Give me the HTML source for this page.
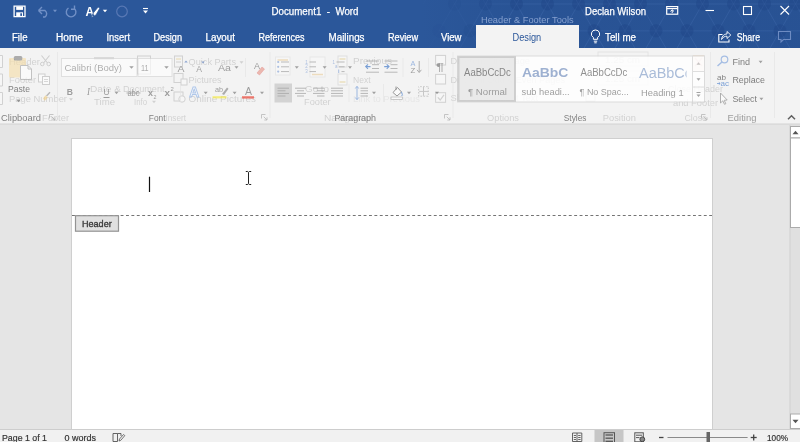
<!DOCTYPE html>
<html><head><meta charset="utf-8"><title>Document1 - Word</title>
<style>
html,body{margin:0;padding:0;width:800px;height:442px;overflow:hidden;background:#e5e5e5;font-family:"Liberation Sans",sans-serif}
svg{display:block;position:absolute;left:0;top:0;will-change:transform}
</style></head><body>
<svg width="800" height="442" viewBox="0 0 800 442">
<rect x="0" y="0" width="800" height="442" fill="#e5e5e5"/>
<rect x="0" y="0" width="800" height="48" fill="#2b579a"/>
<defs><linearGradient id="tg" x1="0" x2="1"><stop offset="0" stop-color="#1d3f7a" stop-opacity="0"/><stop offset=".25" stop-color="#1d3f7a" stop-opacity=".16"/><stop offset="1" stop-color="#1d3f7a" stop-opacity=".2"/></linearGradient></defs>
<rect x="420" y="0" width="380" height="48" fill="url(#tg)"/>
<clipPath id="tc"><rect x="420" y="0" width="380" height="48"/></clipPath>
<g clip-path="url(#tc)">
<line x1="439" y1="-22.85" x2="470" y2="-22.85" stroke="#4b74b6" stroke-width="1" opacity="0.05"/>
<line x1="439" y1="-22.85" x2="454.5" y2="4.0" stroke="#4b74b6" stroke-width="1" opacity="0.05"/>
<line x1="439" y1="-22.85" x2="423.5" y2="4.0" stroke="#4b74b6" stroke-width="1" opacity="0.05"/>
<circle cx="439.0" cy="-22.8" r="6.5" fill="#1f4485" opacity="0.06"/>
<line x1="470" y1="-22.85" x2="501" y2="-22.85" stroke="#4b74b6" stroke-width="1" opacity="0.15"/>
<line x1="470" y1="-22.85" x2="485.5" y2="4.0" stroke="#4b74b6" stroke-width="1" opacity="0.15"/>
<line x1="470" y1="-22.85" x2="454.5" y2="4.0" stroke="#4b74b6" stroke-width="1" opacity="0.15"/>
<circle cx="470.0" cy="-22.8" r="6.5" fill="#1f4485" opacity="0.20"/>
<line x1="501" y1="-22.85" x2="532" y2="-22.85" stroke="#4b74b6" stroke-width="1" opacity="0.25"/>
<line x1="501" y1="-22.85" x2="516.5" y2="4.0" stroke="#4b74b6" stroke-width="1" opacity="0.25"/>
<line x1="501" y1="-22.85" x2="485.5" y2="4.0" stroke="#4b74b6" stroke-width="1" opacity="0.25"/>
<circle cx="501.0" cy="-22.8" r="6.5" fill="#1f4485" opacity="0.34"/>
<line x1="532" y1="-22.85" x2="563" y2="-22.85" stroke="#4b74b6" stroke-width="1" opacity="0.3"/>
<line x1="532" y1="-22.85" x2="547.5" y2="4.0" stroke="#4b74b6" stroke-width="1" opacity="0.3"/>
<line x1="532" y1="-22.85" x2="516.5" y2="4.0" stroke="#4b74b6" stroke-width="1" opacity="0.3"/>
<circle cx="532.0" cy="-22.8" r="6.5" fill="#1f4485" opacity="0.40"/>
<line x1="563" y1="-22.85" x2="594" y2="-22.85" stroke="#4b74b6" stroke-width="1" opacity="0.3"/>
<line x1="563" y1="-22.85" x2="578.5" y2="4.0" stroke="#4b74b6" stroke-width="1" opacity="0.3"/>
<line x1="563" y1="-22.85" x2="547.5" y2="4.0" stroke="#4b74b6" stroke-width="1" opacity="0.3"/>
<circle cx="563.0" cy="-22.8" r="6.5" fill="#1f4485" opacity="0.40"/>
<line x1="594" y1="-22.85" x2="625" y2="-22.85" stroke="#4b74b6" stroke-width="1" opacity="0.3"/>
<line x1="594" y1="-22.85" x2="609.5" y2="4.0" stroke="#4b74b6" stroke-width="1" opacity="0.3"/>
<line x1="594" y1="-22.85" x2="578.5" y2="4.0" stroke="#4b74b6" stroke-width="1" opacity="0.3"/>
<circle cx="594.0" cy="-22.8" r="6.5" fill="#1f4485" opacity="0.40"/>
<line x1="625" y1="-22.85" x2="656" y2="-22.85" stroke="#4b74b6" stroke-width="1" opacity="0.3"/>
<line x1="625" y1="-22.85" x2="640.5" y2="4.0" stroke="#4b74b6" stroke-width="1" opacity="0.3"/>
<line x1="625" y1="-22.85" x2="609.5" y2="4.0" stroke="#4b74b6" stroke-width="1" opacity="0.3"/>
<circle cx="625.0" cy="-22.8" r="6.5" fill="#1f4485" opacity="0.40"/>
<line x1="656" y1="-22.85" x2="687" y2="-22.85" stroke="#4b74b6" stroke-width="1" opacity="0.3"/>
<line x1="656" y1="-22.85" x2="671.5" y2="4.0" stroke="#4b74b6" stroke-width="1" opacity="0.3"/>
<line x1="656" y1="-22.85" x2="640.5" y2="4.0" stroke="#4b74b6" stroke-width="1" opacity="0.3"/>
<circle cx="656.0" cy="-22.8" r="6.5" fill="#1f4485" opacity="0.40"/>
<line x1="687" y1="-22.85" x2="718" y2="-22.85" stroke="#4b74b6" stroke-width="1" opacity="0.3"/>
<line x1="687" y1="-22.85" x2="702.5" y2="4.0" stroke="#4b74b6" stroke-width="1" opacity="0.3"/>
<line x1="687" y1="-22.85" x2="671.5" y2="4.0" stroke="#4b74b6" stroke-width="1" opacity="0.3"/>
<circle cx="687.0" cy="-22.8" r="6.5" fill="#1f4485" opacity="0.40"/>
<line x1="718" y1="-22.85" x2="749" y2="-22.85" stroke="#4b74b6" stroke-width="1" opacity="0.3"/>
<line x1="718" y1="-22.85" x2="733.5" y2="4.0" stroke="#4b74b6" stroke-width="1" opacity="0.3"/>
<line x1="718" y1="-22.85" x2="702.5" y2="4.0" stroke="#4b74b6" stroke-width="1" opacity="0.3"/>
<circle cx="718.0" cy="-22.8" r="6.5" fill="#1f4485" opacity="0.40"/>
<line x1="749" y1="-22.85" x2="780" y2="-22.85" stroke="#4b74b6" stroke-width="1" opacity="0.3"/>
<line x1="749" y1="-22.85" x2="764.5" y2="4.0" stroke="#4b74b6" stroke-width="1" opacity="0.3"/>
<line x1="749" y1="-22.85" x2="733.5" y2="4.0" stroke="#4b74b6" stroke-width="1" opacity="0.3"/>
<circle cx="749.0" cy="-22.8" r="6.5" fill="#1f4485" opacity="0.40"/>
<line x1="780" y1="-22.85" x2="811" y2="-22.85" stroke="#4b74b6" stroke-width="1" opacity="0.3"/>
<line x1="780" y1="-22.85" x2="795.5" y2="4.0" stroke="#4b74b6" stroke-width="1" opacity="0.3"/>
<line x1="780" y1="-22.85" x2="764.5" y2="4.0" stroke="#4b74b6" stroke-width="1" opacity="0.3"/>
<circle cx="780.0" cy="-22.8" r="6.5" fill="#1f4485" opacity="0.40"/>
<line x1="811" y1="-22.85" x2="842" y2="-22.85" stroke="#4b74b6" stroke-width="1" opacity="0.3"/>
<line x1="811" y1="-22.85" x2="826.5" y2="4.0" stroke="#4b74b6" stroke-width="1" opacity="0.3"/>
<line x1="811" y1="-22.85" x2="795.5" y2="4.0" stroke="#4b74b6" stroke-width="1" opacity="0.3"/>
<circle cx="811.0" cy="-22.8" r="6.5" fill="#1f4485" opacity="0.40"/>
<line x1="454.5" y1="4" x2="485.5" y2="4" stroke="#4b74b6" stroke-width="1" opacity="0.1"/>
<line x1="454.5" y1="4" x2="470.0" y2="30.85" stroke="#4b74b6" stroke-width="1" opacity="0.1"/>
<line x1="454.5" y1="4" x2="439.0" y2="30.85" stroke="#4b74b6" stroke-width="1" opacity="0.1"/>
<circle cx="454.5" cy="4.0" r="6.5" fill="#1f4485" opacity="0.13"/>
<line x1="485.5" y1="4" x2="516.5" y2="4" stroke="#4b74b6" stroke-width="1" opacity="0.2"/>
<line x1="485.5" y1="4" x2="501.0" y2="30.85" stroke="#4b74b6" stroke-width="1" opacity="0.2"/>
<line x1="485.5" y1="4" x2="470.0" y2="30.85" stroke="#4b74b6" stroke-width="1" opacity="0.2"/>
<circle cx="485.5" cy="4.0" r="6.5" fill="#1f4485" opacity="0.27"/>
<line x1="516.5" y1="4" x2="547.5" y2="4" stroke="#4b74b6" stroke-width="1" opacity="0.3"/>
<line x1="516.5" y1="4" x2="532.0" y2="30.85" stroke="#4b74b6" stroke-width="1" opacity="0.3"/>
<line x1="516.5" y1="4" x2="501.0" y2="30.85" stroke="#4b74b6" stroke-width="1" opacity="0.3"/>
<circle cx="516.5" cy="4.0" r="6.5" fill="#1f4485" opacity="0.40"/>
<line x1="547.5" y1="4" x2="578.5" y2="4" stroke="#4b74b6" stroke-width="1" opacity="0.3"/>
<line x1="547.5" y1="4" x2="563.0" y2="30.85" stroke="#4b74b6" stroke-width="1" opacity="0.3"/>
<line x1="547.5" y1="4" x2="532.0" y2="30.85" stroke="#4b74b6" stroke-width="1" opacity="0.3"/>
<circle cx="547.5" cy="4.0" r="6.5" fill="#1f4485" opacity="0.40"/>
<line x1="578.5" y1="4" x2="609.5" y2="4" stroke="#4b74b6" stroke-width="1" opacity="0.3"/>
<line x1="578.5" y1="4" x2="594.0" y2="30.85" stroke="#4b74b6" stroke-width="1" opacity="0.3"/>
<line x1="578.5" y1="4" x2="563.0" y2="30.85" stroke="#4b74b6" stroke-width="1" opacity="0.3"/>
<circle cx="578.5" cy="4.0" r="6.5" fill="#1f4485" opacity="0.40"/>
<line x1="609.5" y1="4" x2="640.5" y2="4" stroke="#4b74b6" stroke-width="1" opacity="0.3"/>
<line x1="609.5" y1="4" x2="625.0" y2="30.85" stroke="#4b74b6" stroke-width="1" opacity="0.3"/>
<line x1="609.5" y1="4" x2="594.0" y2="30.85" stroke="#4b74b6" stroke-width="1" opacity="0.3"/>
<circle cx="609.5" cy="4.0" r="6.5" fill="#1f4485" opacity="0.40"/>
<line x1="640.5" y1="4" x2="671.5" y2="4" stroke="#4b74b6" stroke-width="1" opacity="0.3"/>
<line x1="640.5" y1="4" x2="656.0" y2="30.85" stroke="#4b74b6" stroke-width="1" opacity="0.3"/>
<line x1="640.5" y1="4" x2="625.0" y2="30.85" stroke="#4b74b6" stroke-width="1" opacity="0.3"/>
<circle cx="640.5" cy="4.0" r="6.5" fill="#1f4485" opacity="0.40"/>
<line x1="671.5" y1="4" x2="702.5" y2="4" stroke="#4b74b6" stroke-width="1" opacity="0.3"/>
<line x1="671.5" y1="4" x2="687.0" y2="30.85" stroke="#4b74b6" stroke-width="1" opacity="0.3"/>
<line x1="671.5" y1="4" x2="656.0" y2="30.85" stroke="#4b74b6" stroke-width="1" opacity="0.3"/>
<circle cx="671.5" cy="4.0" r="6.5" fill="#1f4485" opacity="0.40"/>
<line x1="702.5" y1="4" x2="733.5" y2="4" stroke="#4b74b6" stroke-width="1" opacity="0.3"/>
<line x1="702.5" y1="4" x2="718.0" y2="30.85" stroke="#4b74b6" stroke-width="1" opacity="0.3"/>
<line x1="702.5" y1="4" x2="687.0" y2="30.85" stroke="#4b74b6" stroke-width="1" opacity="0.3"/>
<circle cx="702.5" cy="4.0" r="6.5" fill="#1f4485" opacity="0.40"/>
<line x1="733.5" y1="4" x2="764.5" y2="4" stroke="#4b74b6" stroke-width="1" opacity="0.3"/>
<line x1="733.5" y1="4" x2="749.0" y2="30.85" stroke="#4b74b6" stroke-width="1" opacity="0.3"/>
<line x1="733.5" y1="4" x2="718.0" y2="30.85" stroke="#4b74b6" stroke-width="1" opacity="0.3"/>
<circle cx="733.5" cy="4.0" r="6.5" fill="#1f4485" opacity="0.40"/>
<line x1="764.5" y1="4" x2="795.5" y2="4" stroke="#4b74b6" stroke-width="1" opacity="0.3"/>
<line x1="764.5" y1="4" x2="780.0" y2="30.85" stroke="#4b74b6" stroke-width="1" opacity="0.3"/>
<line x1="764.5" y1="4" x2="749.0" y2="30.85" stroke="#4b74b6" stroke-width="1" opacity="0.3"/>
<circle cx="764.5" cy="4.0" r="6.5" fill="#1f4485" opacity="0.40"/>
<line x1="795.5" y1="4" x2="826.5" y2="4" stroke="#4b74b6" stroke-width="1" opacity="0.3"/>
<line x1="795.5" y1="4" x2="811.0" y2="30.85" stroke="#4b74b6" stroke-width="1" opacity="0.3"/>
<line x1="795.5" y1="4" x2="780.0" y2="30.85" stroke="#4b74b6" stroke-width="1" opacity="0.3"/>
<circle cx="795.5" cy="4.0" r="6.5" fill="#1f4485" opacity="0.40"/>
<line x1="439" y1="30.85" x2="470" y2="30.85" stroke="#4b74b6" stroke-width="1" opacity="0.05"/>
<line x1="439" y1="30.85" x2="454.5" y2="57.69" stroke="#4b74b6" stroke-width="1" opacity="0.05"/>
<line x1="439" y1="30.85" x2="423.5" y2="57.69" stroke="#4b74b6" stroke-width="1" opacity="0.05"/>
<circle cx="439.0" cy="30.8" r="6.5" fill="#1f4485" opacity="0.06"/>
<line x1="470" y1="30.85" x2="501" y2="30.85" stroke="#4b74b6" stroke-width="1" opacity="0.15"/>
<line x1="470" y1="30.85" x2="485.5" y2="57.69" stroke="#4b74b6" stroke-width="1" opacity="0.15"/>
<line x1="470" y1="30.85" x2="454.5" y2="57.69" stroke="#4b74b6" stroke-width="1" opacity="0.15"/>
<circle cx="470.0" cy="30.8" r="6.5" fill="#1f4485" opacity="0.20"/>
<line x1="501" y1="30.85" x2="532" y2="30.85" stroke="#4b74b6" stroke-width="1" opacity="0.25"/>
<line x1="501" y1="30.85" x2="516.5" y2="57.69" stroke="#4b74b6" stroke-width="1" opacity="0.25"/>
<line x1="501" y1="30.85" x2="485.5" y2="57.69" stroke="#4b74b6" stroke-width="1" opacity="0.25"/>
<circle cx="501.0" cy="30.8" r="6.5" fill="#1f4485" opacity="0.34"/>
<line x1="532" y1="30.85" x2="563" y2="30.85" stroke="#4b74b6" stroke-width="1" opacity="0.3"/>
<line x1="532" y1="30.85" x2="547.5" y2="57.69" stroke="#4b74b6" stroke-width="1" opacity="0.3"/>
<line x1="532" y1="30.85" x2="516.5" y2="57.69" stroke="#4b74b6" stroke-width="1" opacity="0.3"/>
<circle cx="532.0" cy="30.8" r="6.5" fill="#1f4485" opacity="0.40"/>
<line x1="563" y1="30.85" x2="594" y2="30.85" stroke="#4b74b6" stroke-width="1" opacity="0.3"/>
<line x1="563" y1="30.85" x2="578.5" y2="57.69" stroke="#4b74b6" stroke-width="1" opacity="0.3"/>
<line x1="563" y1="30.85" x2="547.5" y2="57.69" stroke="#4b74b6" stroke-width="1" opacity="0.3"/>
<circle cx="563.0" cy="30.8" r="6.5" fill="#1f4485" opacity="0.40"/>
<line x1="594" y1="30.85" x2="625" y2="30.85" stroke="#4b74b6" stroke-width="1" opacity="0.3"/>
<line x1="594" y1="30.85" x2="609.5" y2="57.69" stroke="#4b74b6" stroke-width="1" opacity="0.3"/>
<line x1="594" y1="30.85" x2="578.5" y2="57.69" stroke="#4b74b6" stroke-width="1" opacity="0.3"/>
<circle cx="594.0" cy="30.8" r="6.5" fill="#1f4485" opacity="0.40"/>
<line x1="625" y1="30.85" x2="656" y2="30.85" stroke="#4b74b6" stroke-width="1" opacity="0.3"/>
<line x1="625" y1="30.85" x2="640.5" y2="57.69" stroke="#4b74b6" stroke-width="1" opacity="0.3"/>
<line x1="625" y1="30.85" x2="609.5" y2="57.69" stroke="#4b74b6" stroke-width="1" opacity="0.3"/>
<circle cx="625.0" cy="30.8" r="6.5" fill="#1f4485" opacity="0.40"/>
<line x1="656" y1="30.85" x2="687" y2="30.85" stroke="#4b74b6" stroke-width="1" opacity="0.3"/>
<line x1="656" y1="30.85" x2="671.5" y2="57.69" stroke="#4b74b6" stroke-width="1" opacity="0.3"/>
<line x1="656" y1="30.85" x2="640.5" y2="57.69" stroke="#4b74b6" stroke-width="1" opacity="0.3"/>
<circle cx="656.0" cy="30.8" r="6.5" fill="#1f4485" opacity="0.40"/>
<line x1="687" y1="30.85" x2="718" y2="30.85" stroke="#4b74b6" stroke-width="1" opacity="0.3"/>
<line x1="687" y1="30.85" x2="702.5" y2="57.69" stroke="#4b74b6" stroke-width="1" opacity="0.3"/>
<line x1="687" y1="30.85" x2="671.5" y2="57.69" stroke="#4b74b6" stroke-width="1" opacity="0.3"/>
<circle cx="687.0" cy="30.8" r="6.5" fill="#1f4485" opacity="0.40"/>
<line x1="718" y1="30.85" x2="749" y2="30.85" stroke="#4b74b6" stroke-width="1" opacity="0.3"/>
<line x1="718" y1="30.85" x2="733.5" y2="57.69" stroke="#4b74b6" stroke-width="1" opacity="0.3"/>
<line x1="718" y1="30.85" x2="702.5" y2="57.69" stroke="#4b74b6" stroke-width="1" opacity="0.3"/>
<circle cx="718.0" cy="30.8" r="6.5" fill="#1f4485" opacity="0.40"/>
<line x1="749" y1="30.85" x2="780" y2="30.85" stroke="#4b74b6" stroke-width="1" opacity="0.3"/>
<line x1="749" y1="30.85" x2="764.5" y2="57.69" stroke="#4b74b6" stroke-width="1" opacity="0.3"/>
<line x1="749" y1="30.85" x2="733.5" y2="57.69" stroke="#4b74b6" stroke-width="1" opacity="0.3"/>
<circle cx="749.0" cy="30.8" r="6.5" fill="#1f4485" opacity="0.40"/>
<line x1="780" y1="30.85" x2="811" y2="30.85" stroke="#4b74b6" stroke-width="1" opacity="0.3"/>
<line x1="780" y1="30.85" x2="795.5" y2="57.69" stroke="#4b74b6" stroke-width="1" opacity="0.3"/>
<line x1="780" y1="30.85" x2="764.5" y2="57.69" stroke="#4b74b6" stroke-width="1" opacity="0.3"/>
<circle cx="780.0" cy="30.8" r="6.5" fill="#1f4485" opacity="0.40"/>
<line x1="811" y1="30.85" x2="842" y2="30.85" stroke="#4b74b6" stroke-width="1" opacity="0.3"/>
<line x1="811" y1="30.85" x2="826.5" y2="57.69" stroke="#4b74b6" stroke-width="1" opacity="0.3"/>
<line x1="811" y1="30.85" x2="795.5" y2="57.69" stroke="#4b74b6" stroke-width="1" opacity="0.3"/>
<circle cx="811.0" cy="30.8" r="6.5" fill="#1f4485" opacity="0.40"/>
<line x1="454.5" y1="57.69" x2="485.5" y2="57.69" stroke="#4b74b6" stroke-width="1" opacity="0.1"/>
<line x1="454.5" y1="57.69" x2="470.0" y2="84.54" stroke="#4b74b6" stroke-width="1" opacity="0.1"/>
<line x1="454.5" y1="57.69" x2="439.0" y2="84.54" stroke="#4b74b6" stroke-width="1" opacity="0.1"/>
<circle cx="454.5" cy="57.7" r="6.5" fill="#1f4485" opacity="0.13"/>
<line x1="485.5" y1="57.69" x2="516.5" y2="57.69" stroke="#4b74b6" stroke-width="1" opacity="0.2"/>
<line x1="485.5" y1="57.69" x2="501.0" y2="84.54" stroke="#4b74b6" stroke-width="1" opacity="0.2"/>
<line x1="485.5" y1="57.69" x2="470.0" y2="84.54" stroke="#4b74b6" stroke-width="1" opacity="0.2"/>
<circle cx="485.5" cy="57.7" r="6.5" fill="#1f4485" opacity="0.27"/>
<line x1="516.5" y1="57.69" x2="547.5" y2="57.69" stroke="#4b74b6" stroke-width="1" opacity="0.3"/>
<line x1="516.5" y1="57.69" x2="532.0" y2="84.54" stroke="#4b74b6" stroke-width="1" opacity="0.3"/>
<line x1="516.5" y1="57.69" x2="501.0" y2="84.54" stroke="#4b74b6" stroke-width="1" opacity="0.3"/>
<circle cx="516.5" cy="57.7" r="6.5" fill="#1f4485" opacity="0.40"/>
<line x1="547.5" y1="57.69" x2="578.5" y2="57.69" stroke="#4b74b6" stroke-width="1" opacity="0.3"/>
<line x1="547.5" y1="57.69" x2="563.0" y2="84.54" stroke="#4b74b6" stroke-width="1" opacity="0.3"/>
<line x1="547.5" y1="57.69" x2="532.0" y2="84.54" stroke="#4b74b6" stroke-width="1" opacity="0.3"/>
<circle cx="547.5" cy="57.7" r="6.5" fill="#1f4485" opacity="0.40"/>
<line x1="578.5" y1="57.69" x2="609.5" y2="57.69" stroke="#4b74b6" stroke-width="1" opacity="0.3"/>
<line x1="578.5" y1="57.69" x2="594.0" y2="84.54" stroke="#4b74b6" stroke-width="1" opacity="0.3"/>
<line x1="578.5" y1="57.69" x2="563.0" y2="84.54" stroke="#4b74b6" stroke-width="1" opacity="0.3"/>
<circle cx="578.5" cy="57.7" r="6.5" fill="#1f4485" opacity="0.40"/>
<line x1="609.5" y1="57.69" x2="640.5" y2="57.69" stroke="#4b74b6" stroke-width="1" opacity="0.3"/>
<line x1="609.5" y1="57.69" x2="625.0" y2="84.54" stroke="#4b74b6" stroke-width="1" opacity="0.3"/>
<line x1="609.5" y1="57.69" x2="594.0" y2="84.54" stroke="#4b74b6" stroke-width="1" opacity="0.3"/>
<circle cx="609.5" cy="57.7" r="6.5" fill="#1f4485" opacity="0.40"/>
<line x1="640.5" y1="57.69" x2="671.5" y2="57.69" stroke="#4b74b6" stroke-width="1" opacity="0.3"/>
<line x1="640.5" y1="57.69" x2="656.0" y2="84.54" stroke="#4b74b6" stroke-width="1" opacity="0.3"/>
<line x1="640.5" y1="57.69" x2="625.0" y2="84.54" stroke="#4b74b6" stroke-width="1" opacity="0.3"/>
<circle cx="640.5" cy="57.7" r="6.5" fill="#1f4485" opacity="0.40"/>
<line x1="671.5" y1="57.69" x2="702.5" y2="57.69" stroke="#4b74b6" stroke-width="1" opacity="0.3"/>
<line x1="671.5" y1="57.69" x2="687.0" y2="84.54" stroke="#4b74b6" stroke-width="1" opacity="0.3"/>
<line x1="671.5" y1="57.69" x2="656.0" y2="84.54" stroke="#4b74b6" stroke-width="1" opacity="0.3"/>
<circle cx="671.5" cy="57.7" r="6.5" fill="#1f4485" opacity="0.40"/>
<line x1="702.5" y1="57.69" x2="733.5" y2="57.69" stroke="#4b74b6" stroke-width="1" opacity="0.3"/>
<line x1="702.5" y1="57.69" x2="718.0" y2="84.54" stroke="#4b74b6" stroke-width="1" opacity="0.3"/>
<line x1="702.5" y1="57.69" x2="687.0" y2="84.54" stroke="#4b74b6" stroke-width="1" opacity="0.3"/>
<circle cx="702.5" cy="57.7" r="6.5" fill="#1f4485" opacity="0.40"/>
<line x1="733.5" y1="57.69" x2="764.5" y2="57.69" stroke="#4b74b6" stroke-width="1" opacity="0.3"/>
<line x1="733.5" y1="57.69" x2="749.0" y2="84.54" stroke="#4b74b6" stroke-width="1" opacity="0.3"/>
<line x1="733.5" y1="57.69" x2="718.0" y2="84.54" stroke="#4b74b6" stroke-width="1" opacity="0.3"/>
<circle cx="733.5" cy="57.7" r="6.5" fill="#1f4485" opacity="0.40"/>
<line x1="764.5" y1="57.69" x2="795.5" y2="57.69" stroke="#4b74b6" stroke-width="1" opacity="0.3"/>
<line x1="764.5" y1="57.69" x2="780.0" y2="84.54" stroke="#4b74b6" stroke-width="1" opacity="0.3"/>
<line x1="764.5" y1="57.69" x2="749.0" y2="84.54" stroke="#4b74b6" stroke-width="1" opacity="0.3"/>
<circle cx="764.5" cy="57.7" r="6.5" fill="#1f4485" opacity="0.40"/>
<line x1="795.5" y1="57.69" x2="826.5" y2="57.69" stroke="#4b74b6" stroke-width="1" opacity="0.3"/>
<line x1="795.5" y1="57.69" x2="811.0" y2="84.54" stroke="#4b74b6" stroke-width="1" opacity="0.3"/>
<line x1="795.5" y1="57.69" x2="780.0" y2="84.54" stroke="#4b74b6" stroke-width="1" opacity="0.3"/>
<circle cx="795.5" cy="57.7" r="6.5" fill="#1f4485" opacity="0.40"/>
</g>
<text x="481.0" y="23.0" font-size="9.5" fill="#86a0cf" textLength="92.7" lengthAdjust="spacingAndGlyphs" font-family="Liberation Sans, sans-serif">Header &amp; Footer Tools</text>
<rect x="476" y="25" width="103" height="24" fill="#f3f3f3"/>
<text x="271.5" y="14.8" font-size="10.5" fill="#fff" textLength="87.0" lengthAdjust="spacingAndGlyphs" font-family="Liberation Sans, sans-serif" stroke="#fff" stroke-width="0.25">Document1  -  Word</text>
<text x="585.0" y="14.8" font-size="10.5" fill="#fff" textLength="61.0" lengthAdjust="spacingAndGlyphs" font-family="Liberation Sans, sans-serif" stroke="#fff" stroke-width="0.25">Declan Wilson</text>
<text x="12.0" y="40.6" font-size="10" fill="#fff" textLength="15.5" lengthAdjust="spacingAndGlyphs" font-family="Liberation Sans, sans-serif" stroke="#fff" stroke-width="0.25">File</text>
<text x="56.0" y="40.6" font-size="10" fill="#fff" textLength="27.0" lengthAdjust="spacingAndGlyphs" font-family="Liberation Sans, sans-serif" stroke="#fff" stroke-width="0.25">Home</text>
<text x="106.5" y="40.6" font-size="10" fill="#fff" textLength="23.5" lengthAdjust="spacingAndGlyphs" font-family="Liberation Sans, sans-serif" stroke="#fff" stroke-width="0.25">Insert</text>
<text x="153.5" y="40.6" font-size="10" fill="#fff" textLength="28.5" lengthAdjust="spacingAndGlyphs" font-family="Liberation Sans, sans-serif" stroke="#fff" stroke-width="0.25">Design</text>
<text x="205.5" y="40.6" font-size="10" fill="#fff" textLength="29.5" lengthAdjust="spacingAndGlyphs" font-family="Liberation Sans, sans-serif" stroke="#fff" stroke-width="0.25">Layout</text>
<text x="258.5" y="40.6" font-size="10" fill="#fff" textLength="46.0" lengthAdjust="spacingAndGlyphs" font-family="Liberation Sans, sans-serif" stroke="#fff" stroke-width="0.25">References</text>
<text x="328.5" y="40.6" font-size="10" fill="#fff" textLength="36.0" lengthAdjust="spacingAndGlyphs" font-family="Liberation Sans, sans-serif" stroke="#fff" stroke-width="0.25">Mailings</text>
<text x="388.0" y="40.6" font-size="10" fill="#fff" textLength="30.0" lengthAdjust="spacingAndGlyphs" font-family="Liberation Sans, sans-serif" stroke="#fff" stroke-width="0.25">Review</text>
<text x="441.0" y="40.6" font-size="10" fill="#fff" textLength="20.5" lengthAdjust="spacingAndGlyphs" font-family="Liberation Sans, sans-serif" stroke="#fff" stroke-width="0.25">View</text>
<text x="605.0" y="40.6" font-size="10" fill="#fff" textLength="31.0" lengthAdjust="spacingAndGlyphs" font-family="Liberation Sans, sans-serif" stroke="#fff" stroke-width="0.25">Tell me</text>
<text x="736.7" y="40.6" font-size="10" fill="#fff" textLength="23.3" lengthAdjust="spacingAndGlyphs" font-family="Liberation Sans, sans-serif" stroke="#fff" stroke-width="0.25">Share</text>
<text x="512.5" y="40.6" font-size="10" fill="#2b579a" textLength="28.7" lengthAdjust="spacingAndGlyphs" font-family="Liberation Sans, sans-serif">Design</text>
<path d="M14.1,6.2 H25 V16.6 H14.1 Z" fill="none" stroke="#fff" stroke-width="1.3" />
<rect x="16.2" y="6.5" width="6.8" height="3.4" fill="#fff"/>
<rect x="16.2" y="12.3" width="6.8" height="4.3" fill="#fff"/>
<rect x="20.3" y="13.3" width="1.7" height="2.6" fill="#2b579a"/>
<path d="M38.5,10.5 L42,7 M38.5,10.5 L42,14 M38.5,10.5 H45 A4,4 0 0 1 45,17 H43" fill="none" stroke="#7190c6" stroke-width="1.4" />
<path d="M53.0,9.75 L57.0,9.75 L55,12.25 Z" fill="#7190c6" />
<path d="M68.5,8 A4.8,4.8 0 1 0 74,8.2 M74.5,5.5 V9.2 H71" fill="none" stroke="#7190c6" stroke-width="1.4" />
<text x="85.5" y="15.7" font-size="13" fill="#fff" textLength="8.5" lengthAdjust="spacingAndGlyphs" font-family="Liberation Sans, sans-serif" font-weight="bold">A</text>
<path d="M98.2,7 L93.8,12.2 L91,17.8 L96,15 L99.8,8.3 Z" fill="#fff" stroke="#2b579a" stroke-width="0.8" />
<circle cx="93.3" cy="15.2" r="1" fill="#2b579a"/>
<path d="M102.75,9.75 L107.25,9.75 L105,12.25 Z" fill="#fff" />
<circle cx="122" cy="11.5" r="5.3" fill="none" stroke="#5878b4" stroke-width="1.2"/>
<line x1="143" y1="8.5" x2="148" y2="8.5" stroke="#fff" stroke-width="1.1"/>
<path d="M143.0,10.5 L148.0,10.5 L145.5,13.5 Z" fill="#fff" />
<rect x="666.7" y="6.6" width="11" height="7.6" fill="none" stroke="#fff" stroke-width="1.2"/>
<line x1="666.7" y1="8.6" x2="677.7" y2="8.6" stroke="#fff" stroke-width="1.2"/>
<path d="M672.2,13 V10 M670.4,11.4 L672.2,9.8 L674,11.4" fill="none" stroke="#fff" stroke-width="1" />
<line x1="705.5" y1="10.5" x2="714" y2="10.5" stroke="#fff" stroke-width="1.1"/>
<rect x="743.5" y="6.5" width="8" height="8" fill="none" stroke="#fff" stroke-width="1.1"/>
<path d="M780.5,6 L789,14.5 M789,6 L780.5,14.5" fill="none" stroke="#fff" stroke-width="1.1" />
<path d="M595.5,30 A4,4 0 0 1 597.6,37.5 V39.3 H593.4 V37.5 A4,4 0 0 1 595.5,30 Z M593.8,41.2 H597.2 M594.3,42.8 H596.7" fill="none" stroke="#fff" stroke-width="1" />
<path d="M722.5,34.5 H718.8 V42 H729 V39.5" fill="none" stroke="#fff" stroke-width="1.1" />
<path d="M721.5,39.5 C722,35.5 724.5,34 727,34 V31.5 L730.8,35 L727,38.5 V36.2 C724.8,36.2 723,37 721.5,39.5 Z" fill="none" stroke="#fff" stroke-width="0.9" />
<path d="M778.5,31.5 H790.5 V39.5 H783.5 L781,42 V39.5 H778.5 Z" fill="none" stroke="#6d8bc2" stroke-width="1.1" />
<rect x="0" y="48" width="800" height="76" fill="#f3f3f3"/>
<line x1="0" y1="124" x2="800" y2="124" stroke="#d2d2d2" stroke-width="1"/>
<g opacity=".27">
<path d="M-3,55.5 H2.5 V67.5 H-3" fill="#fff" stroke="#777" stroke-width="1" />
<path d="M-3,74 H2.5 V86 H-3" fill="#fff" stroke="#777" stroke-width="1" />
<path d="M-3,92.5 H2.5 V104.5 H-3" fill="#fff" stroke="#777" stroke-width="1" />
<text x="9.0" y="65.4" font-size="9.5" fill="#777" textLength="31.0" lengthAdjust="spacingAndGlyphs" font-family="Liberation Sans, sans-serif">Header</text>
<text x="9.0" y="83.4" font-size="9.5" fill="#777" textLength="27.0" lengthAdjust="spacingAndGlyphs" font-family="Liberation Sans, sans-serif">Footer</text>
<text x="9.0" y="102.4" font-size="9.5" fill="#777" textLength="58.0" lengthAdjust="spacingAndGlyphs" font-family="Liberation Sans, sans-serif">Page Number</text>
<path d="M69.0,98.25 L73.0,98.25 L71,100.75 Z" fill="#777" />
<text x="42.0" y="120.8" font-size="9.5" fill="#777" textLength="27.0" lengthAdjust="spacingAndGlyphs" font-family="Liberation Sans, sans-serif">Footer</text>
<text x="90.0" y="92.4" font-size="9.5" fill="#777" textLength="31.0" lengthAdjust="spacingAndGlyphs" font-family="Liberation Sans, sans-serif">Date &amp;</text>
<text x="123.0" y="92.4" font-size="9.5" fill="#777" textLength="41.5" lengthAdjust="spacingAndGlyphs" font-family="Liberation Sans, sans-serif">Document</text>
<text x="94.0" y="105.0" font-size="9.5" fill="#777" textLength="21.0" lengthAdjust="spacingAndGlyphs" font-family="Liberation Sans, sans-serif">Time</text>
<text x="134.0" y="105.0" font-size="9.5" fill="#777" textLength="13.0" lengthAdjust="spacingAndGlyphs" font-family="Liberation Sans, sans-serif">Info</text>
<path d="M152.0,100.75 L156.0,100.75 L154,103.25 Z" fill="#777" />
<rect x="94" y="57" width="20" height="3" fill="#999"/>
<rect x="137.5" y="56" width="13" height="18" fill="none" stroke="#777" stroke-width="1"/>
<rect x="174.5" y="56" width="8" height="11" fill="none" stroke="#777" stroke-width="1"/>
<line x1="176" y1="59" x2="181" y2="59" stroke="#c90" stroke-width="1"/>
<line x1="176" y1="62" x2="181" y2="62" stroke="#777" stroke-width="1"/>
<rect x="174" y="73.5" width="9" height="9" fill="none" stroke="#777" stroke-width="1"/>
<rect x="181" y="79" width="6" height="6" fill="#fff" stroke="#777" stroke-width="1"/>
<rect x="174" y="92" width="9" height="9" fill="none" stroke="#777" stroke-width="1"/>
<circle cx="182" cy="99" r="3.2" fill="#fff" stroke="#777" stroke-width="1"/>
<text x="188.6" y="65.2" font-size="9.5" fill="#777" textLength="47.4" lengthAdjust="spacingAndGlyphs" font-family="Liberation Sans, sans-serif">Quick Parts</text>
<path d="M239.5,61.25 L243.5,61.25 L241.5,63.75 Z" fill="#777" />
<text x="188.6" y="83.4" font-size="9.5" fill="#777" textLength="33.1" lengthAdjust="spacingAndGlyphs" font-family="Liberation Sans, sans-serif">Pictures</text>
<text x="188.6" y="102.4" font-size="9.5" fill="#777" textLength="67.4" lengthAdjust="spacingAndGlyphs" font-family="Liberation Sans, sans-serif">Online Pictures</text>
<text x="165.5" y="120.8" font-size="9.5" fill="#777" textLength="20.5" lengthAdjust="spacingAndGlyphs" font-family="Liberation Sans, sans-serif">Insert</text>
<rect x="275.5" y="57" width="14.5" height="18" fill="#fff" stroke="#ccc" stroke-width="1"/>
<rect x="310" y="57" width="15" height="20" fill="#fff" stroke="#ccc" stroke-width="1"/>
<line x1="312" y1="74.5" x2="323" y2="74.5" stroke="#e0a030" stroke-width="1.5"/>
<line x1="277.5" y1="60" x2="288" y2="60" stroke="#e0a030" stroke-width="1.5"/>
<text x="305.0" y="92.1" font-size="9.5" fill="#777" textLength="24.0" lengthAdjust="spacingAndGlyphs" font-family="Liberation Sans, sans-serif">Go to</text>
<text x="304.0" y="105.0" font-size="9.5" fill="#777" textLength="26.7" lengthAdjust="spacingAndGlyphs" font-family="Liberation Sans, sans-serif">Footer</text>
<rect x="338" y="56" width="9" height="11" fill="#fff" stroke="#aaa" stroke-width="1"/>
<line x1="339.5" y1="59" x2="345.5" y2="59" stroke="#c90" stroke-width="1.2"/>
<rect x="338" y="74" width="9" height="11" fill="#fff" stroke="#aaa" stroke-width="1"/>
<line x1="339.5" y1="82" x2="345.5" y2="82" stroke="#c90" stroke-width="1.2"/>
<text x="353.0" y="64.4" font-size="9.5" fill="#777" textLength="39.0" lengthAdjust="spacingAndGlyphs" font-family="Liberation Sans, sans-serif">Previous</text>
<text x="353.0" y="83.4" font-size="9.5" fill="#777" textLength="17.6" lengthAdjust="spacingAndGlyphs" font-family="Liberation Sans, sans-serif">Next</text>
<text x="353.0" y="102.4" font-size="9.5" fill="#c4c4c4" textLength="67.0" lengthAdjust="spacingAndGlyphs" font-family="Liberation Sans, sans-serif">Link to Previous</text>
<text x="324.0" y="120.8" font-size="9.5" fill="#777" textLength="48.0" lengthAdjust="spacingAndGlyphs" font-family="Liberation Sans, sans-serif">Navigation</text>
<rect x="435.6" y="55.4" width="10" height="9.6" fill="#fff" stroke="#777" stroke-width="1"/>
<rect x="435.6" y="74.4" width="10" height="9.6" fill="#fff" stroke="#777" stroke-width="1"/>
<rect x="435.6" y="92.7" width="10" height="9.6" fill="#fff" stroke="#777" stroke-width="1"/>
<path d="M437.8,97.3 L440.2,100 L444,94.8" fill="none" stroke="#777" stroke-width="1.2" />
<text x="450.5" y="63.9" font-size="9.5" fill="#777" textLength="79.5" lengthAdjust="spacingAndGlyphs" font-family="Liberation Sans, sans-serif">Different First Page</text>
<text x="450.5" y="82.9" font-size="9.5" fill="#777" textLength="114.5" lengthAdjust="spacingAndGlyphs" font-family="Liberation Sans, sans-serif">Different Odd &amp; Even Pages</text>
<text x="450.5" y="101.4" font-size="9.5" fill="#777" textLength="87.5" lengthAdjust="spacingAndGlyphs" font-family="Liberation Sans, sans-serif">Show Document Text</text>
<text x="487.0" y="120.8" font-size="9.5" fill="#777" textLength="32.0" lengthAdjust="spacingAndGlyphs" font-family="Liberation Sans, sans-serif">Options</text>
<text x="605.0" y="63.4" font-size="9.5" fill="#777" textLength="35.0" lengthAdjust="spacingAndGlyphs" font-family="Liberation Sans, sans-serif">1.25 cm</text>
<text x="605.0" y="82.4" font-size="9.5" fill="#777" textLength="35.0" lengthAdjust="spacingAndGlyphs" font-family="Liberation Sans, sans-serif">1.25 cm</text>
<rect x="598" y="52" width="50" height="14" fill="none" stroke="#bbb" stroke-width="1"/>
<rect x="598" y="71" width="50" height="14" fill="none" stroke="#bbb" stroke-width="1"/>
<rect x="586" y="92" width="9" height="9" fill="none" stroke="#777" stroke-width="1"/>
<text x="602.8" y="120.8" font-size="9.5" fill="#777" textLength="33.2" lengthAdjust="spacingAndGlyphs" font-family="Liberation Sans, sans-serif">Position</text>
<rect x="693" y="55" width="11" height="16" fill="#f3c9a0"/>
<path d="M695,58 L702,66 M702,58 L695,66" fill="none" stroke="#c33" stroke-width="1.4" />
<text x="668.0" y="92.4" font-size="9.5" fill="#777" textLength="55.0" lengthAdjust="spacingAndGlyphs" font-family="Liberation Sans, sans-serif">Close Header</text>
<text x="673.0" y="105.8" font-size="9.5" fill="#777" textLength="45.0" lengthAdjust="spacingAndGlyphs" font-family="Liberation Sans, sans-serif">and Footer</text>
<text x="684.4" y="120.8" font-size="9.5" fill="#777" textLength="22.6" lengthAdjust="spacingAndGlyphs" font-family="Liberation Sans, sans-serif">Close</text>
</g>
<rect x="458" y="56.5" width="246" height="45" fill="#fff" opacity="0.6"/>
<rect x="458.5" y="57" width="57" height="44" fill="#ececec" opacity="0.75"/>
<g opacity=".66">
<rect x="9" y="58" width="17" height="19.5" fill="#f5deac" rx="1"/>
<rect x="13.8" y="56" width="8.5" height="4.5" fill="#888" rx="1.5"/>
<path d="M20.5,65.5 H28 L31.5,69 V79.5 H20.5 Z" fill="#fff" stroke="#aaa" stroke-width="1" />
<path d="M28,65.5 V69 H31.5" fill="none" stroke="#aaa" stroke-width="1" />
<text x="8.0" y="92.0" font-size="9.5" fill="#444" textLength="22.0" lengthAdjust="spacingAndGlyphs" font-family="Liberation Sans, sans-serif">Paste</text>
<path d="M16.5,99.75 L20.5,99.75 L18.5,102.25 Z" fill="#666" />
<path d="M41.5,55.5 L47.5,63 M49.5,55.5 L43.5,63" fill="none" stroke="#bbb" stroke-width="1.1" />
<circle cx="42.3" cy="64" r="1.8" fill="none" stroke="#bbb" stroke-width="1"/><circle cx="48.7" cy="64" r="1.8" fill="none" stroke="#bbb" stroke-width="1"/>
<rect x="38.5" y="74" width="6.5" height="8" fill="#fff" stroke="#bbb" stroke-width="1"/>
<rect x="42.5" y="76.5" width="7" height="8" fill="#fff" stroke="#bbb" stroke-width="1"/>
<line x1="44" y1="79.5" x2="48" y2="79.5" stroke="#bbb" stroke-width="0.8"/>
<line x1="44" y1="81.5" x2="48" y2="81.5" stroke="#bbb" stroke-width="0.8"/>
<path d="M46.5,96 L50,92.3" fill="none" stroke="#999" stroke-width="1.4" />
<path d="M43,98.5 L45.5,95.2 L47.8,97.5 L44.8,100.8 Z" fill="#f0cf88" />
<text x="1.0" y="120.8" font-size="9.5" fill="#444" textLength="40.0" lengthAdjust="spacingAndGlyphs" font-family="Liberation Sans, sans-serif">Clipboard</text>
<path d="M49.5,118.5 V114.5 H53.5 M51.7,116.7 L55.0,120.0 M55.0,117.3 V120.0 H52.3" fill="none" stroke="#999" stroke-width="0.8" />
<line x1="57.5" y1="52" x2="57.5" y2="118" stroke="#e4e4e4" stroke-width="1"/>
<rect x="61.5" y="58.5" width="75.5" height="18" fill="#fff" stroke="#d6d6d6" stroke-width="1"/>
<text x="64.5" y="71.0" font-size="9.5" fill="#8c8c8c" textLength="57.5" lengthAdjust="spacingAndGlyphs" font-family="Liberation Sans, sans-serif">Calibri (Body)</text>
<path d="M129.25,66.25 L133.75,66.25 L131.5,68.75 Z" fill="#777" />
<rect x="138" y="58.5" width="34" height="18" fill="#fff" stroke="#d6d6d6" stroke-width="1"/>
<text x="141.0" y="71.0" font-size="9.5" fill="#8c8c8c" textLength="7.6" lengthAdjust="spacingAndGlyphs" font-family="Liberation Sans, sans-serif">11</text>
<path d="M164.25,66.25 L168.75,66.25 L166.5,68.75 Z" fill="#777" />
<text x="177.6" y="71.7" font-size="9.5" fill="#707070" textLength="7.0" lengthAdjust="spacingAndGlyphs" font-family="Liberation Sans, sans-serif">A</text>
<path d="M184.25,62.6 L187.75,62.6 L186,60.4 Z" fill="#5a7fc0" />
<text x="196.3" y="72.0" font-size="8.5" fill="#707070" textLength="5.7" lengthAdjust="spacingAndGlyphs" font-family="Liberation Sans, sans-serif">A</text>
<path d="M201.25,61.4 L204.75,61.4 L203,63.6 Z" fill="#5a7fc0" />
<text x="218.0" y="71.0" font-size="9.5" fill="#707070" textLength="13.0" lengthAdjust="spacingAndGlyphs" font-family="Liberation Sans, sans-serif">Aa</text>
<path d="M234.5,66.25 L238.5,66.25 L236.5,68.75 Z" fill="#777" />
<line x1="245.5" y1="58" x2="245.5" y2="77" stroke="#e4e4e4" stroke-width="1"/>
<text x="254.0" y="68.9" font-size="9.5" fill="#707070" textLength="6.0" lengthAdjust="spacingAndGlyphs" font-family="Liberation Sans, sans-serif">A</text>
<path d="M257,73 L262,67 L264.5,69 L259.5,75 Z" fill="#e79a8c" stroke="#d66" stroke-width="0.5" />
<text x="66.8" y="95.4" font-size="9.5" fill="#707070" textLength="6.2" lengthAdjust="spacingAndGlyphs" font-family="Liberation Sans, sans-serif" font-weight="bold">B</text>
<text x="87.0" y="95.4" font-size="9.5" fill="#707070" textLength="3.0" lengthAdjust="spacingAndGlyphs" font-family="Liberation Serif, serif" font-style="italic">I</text>
<text x="103.5" y="94.7" font-size="9.5" fill="#707070" textLength="6.0" lengthAdjust="spacingAndGlyphs" font-family="Liberation Sans, sans-serif">U</text>
<line x1="103.5" y1="97.5" x2="109.5" y2="97.5" stroke="#707070" stroke-width="1"/>
<path d="M114.5,91.75 L118.5,91.75 L116.5,94.25 Z" fill="#777" />
<text x="127.4" y="96.2" font-size="9" fill="#707070" textLength="12.1" lengthAdjust="spacingAndGlyphs" font-family="Liberation Sans, sans-serif">abc</text>
<line x1="126.5" y1="93" x2="140.5" y2="93" stroke="#707070" stroke-width="0.8"/>
<text x="148.0" y="95.9" font-size="9.5" fill="#707070" textLength="5.0" lengthAdjust="spacingAndGlyphs" font-family="Liberation Sans, sans-serif" font-weight="bold">x</text>
<text x="153.5" y="98.6" font-size="6" fill="#707070" textLength="3.0" lengthAdjust="spacingAndGlyphs" font-family="Liberation Sans, sans-serif">2</text>
<text x="164.5" y="95.9" font-size="9.5" fill="#707070" textLength="5.5" lengthAdjust="spacingAndGlyphs" font-family="Liberation Sans, sans-serif" font-weight="bold">x</text>
<text x="170.5" y="90.6" font-size="6" fill="#707070" textLength="3.3" lengthAdjust="spacingAndGlyphs" font-family="Liberation Sans, sans-serif">2</text>
<line x1="180.5" y1="84" x2="180.5" y2="102" stroke="#e4e4e4" stroke-width="1"/>
<text x="189.3" y="97" font-size="14" font-family="Liberation Sans, sans-serif" font-weight="bold" fill="#fff" stroke="#8fb2e6" stroke-width="1" textLength="10" lengthAdjust="spacingAndGlyphs">A</text>
<path d="M203.7,91.75 L207.7,91.75 L205.7,94.25 Z" fill="#777" />
<text x="215.0" y="91.9" font-size="8" fill="#707070" textLength="8.0" lengthAdjust="spacingAndGlyphs" font-family="Liberation Sans, sans-serif">ab</text>
<path d="M222,94 L227,87.5 L228.5,88.7 L224,95 Z" fill="#888" />
<rect x="212.5" y="96.2" width="14" height="2.2" fill="#f6ea40"/>
<path d="M232.6,91.75 L236.6,91.75 L234.6,94.25 Z" fill="#777" />
<text x="245.0" y="95.3" font-size="11.5" fill="#707070" textLength="7.0" lengthAdjust="spacingAndGlyphs" font-family="Liberation Sans, sans-serif">A</text>
<rect x="242" y="96.2" width="12" height="2.4" fill="#ee4030"/>
<path d="M260.0,91.75 L264.0,91.75 L262,94.25 Z" fill="#777" />
<text x="148.8" y="120.8" font-size="9.5" fill="#444" textLength="16.7" lengthAdjust="spacingAndGlyphs" font-family="Liberation Sans, sans-serif">Font</text>
<path d="M261.5,118.5 V114.5 H265.5 M263.7,116.7 L267.0,120.0 M267.0,117.3 V120.0 H264.3" fill="none" stroke="#999" stroke-width="0.8" />
<line x1="270" y1="52" x2="270" y2="118" stroke="#e4e4e4" stroke-width="1"/>
<circle cx="278.2" cy="62.0" r="1.1" fill="#86a3d6"/>
<line x1="281" y1="62.0" x2="289" y2="62.0" stroke="#9a9a9a" stroke-width="1"/>
<circle cx="278.2" cy="66.8" r="1.1" fill="#86a3d6"/>
<line x1="281" y1="66.8" x2="289" y2="66.8" stroke="#9a9a9a" stroke-width="1"/>
<circle cx="278.2" cy="71.6" r="1.1" fill="#86a3d6"/>
<line x1="281" y1="71.6" x2="289" y2="71.6" stroke="#9a9a9a" stroke-width="1"/>
<path d="M294.8,66.25 L298.8,66.25 L296.8,68.75 Z" fill="#777" />
<text x="305.3" y="63.6" font-size="4.5" fill="#86a3d6" textLength="2.5" lengthAdjust="spacingAndGlyphs" font-family="Liberation Sans, sans-serif">1</text>
<line x1="309.5" y1="62.0" x2="316" y2="62.0" stroke="#9a9a9a" stroke-width="1"/>
<text x="305.3" y="68.4" font-size="4.5" fill="#86a3d6" textLength="2.5" lengthAdjust="spacingAndGlyphs" font-family="Liberation Sans, sans-serif">2</text>
<line x1="309.5" y1="66.8" x2="316" y2="66.8" stroke="#9a9a9a" stroke-width="1"/>
<text x="305.3" y="73.2" font-size="4.5" fill="#86a3d6" textLength="2.5" lengthAdjust="spacingAndGlyphs" font-family="Liberation Sans, sans-serif">3</text>
<line x1="309.5" y1="71.6" x2="316" y2="71.6" stroke="#9a9a9a" stroke-width="1"/>
<path d="M322.6,66.25 L326.6,66.25 L324.6,68.75 Z" fill="#777" />
<text x="332.6" y="63.6" font-size="4.5" fill="#86a3d6" textLength="2.4" lengthAdjust="spacingAndGlyphs" font-family="Liberation Sans, sans-serif">1</text>
<line x1="336.5" y1="62.0" x2="344.6" y2="62.0" stroke="#9a9a9a" stroke-width="1"/>
<text x="335.1" y="68.4" font-size="4.5" fill="#86a3d6" textLength="2.4" lengthAdjust="spacingAndGlyphs" font-family="Liberation Sans, sans-serif">a</text>
<line x1="339.0" y1="66.8" x2="344.6" y2="66.8" stroke="#9a9a9a" stroke-width="1"/>
<text x="337.6" y="73.2" font-size="4.5" fill="#86a3d6" textLength="2.4" lengthAdjust="spacingAndGlyphs" font-family="Liberation Sans, sans-serif">i</text>
<line x1="341.5" y1="71.6" x2="344.6" y2="71.6" stroke="#9a9a9a" stroke-width="1"/>
<path d="M348.0,66.25 L352.0,66.25 L350,68.75 Z" fill="#777" />
<line x1="366" y1="61" x2="379" y2="61" stroke="#9a9a9a" stroke-width="1"/>
<line x1="366" y1="72.2" x2="379" y2="72.2" stroke="#9a9a9a" stroke-width="1"/>
<line x1="372" y1="64.7" x2="379" y2="64.7" stroke="#9a9a9a" stroke-width="1"/>
<line x1="372" y1="68.5" x2="379" y2="68.5" stroke="#9a9a9a" stroke-width="1"/>
<path d="M370.5,66.6 H366 M368,64.4 L365.7,66.6 L368,68.8" fill="none" stroke="#3b74c6" stroke-width="1.1" />
<line x1="384.5" y1="61" x2="397.5" y2="61" stroke="#9a9a9a" stroke-width="1"/>
<line x1="384.5" y1="72.2" x2="397.5" y2="72.2" stroke="#9a9a9a" stroke-width="1"/>
<line x1="390.5" y1="64.7" x2="397.5" y2="64.7" stroke="#9a9a9a" stroke-width="1"/>
<line x1="390.5" y1="68.5" x2="397.5" y2="68.5" stroke="#9a9a9a" stroke-width="1"/>
<path d="M384.2,66.6 H388.7 M386.7,64.4 L389.0,66.6 L386.7,68.8" fill="none" stroke="#3b74c6" stroke-width="1.1" />
<line x1="403" y1="58" x2="403" y2="77" stroke="#e4e4e4" stroke-width="1"/>
<text x="410.5" y="66.2" font-size="7.5" fill="#6f98d6" textLength="4.9" lengthAdjust="spacingAndGlyphs" font-family="Liberation Sans, sans-serif">A</text>
<text x="410.6" y="72.7" font-size="7.5" fill="#707070" textLength="4.8" lengthAdjust="spacingAndGlyphs" font-family="Liberation Sans, sans-serif">Z</text>
<path d="M419.2,61 V72.3 M417,69.8 L419.2,72.5 L421.4,69.8" fill="none" stroke="#8a8a8a" stroke-width="1" />
<line x1="428.6" y1="58" x2="428.6" y2="77" stroke="#e4e4e4" stroke-width="1"/>
<text x="436" y="70.6" font-size="11.5" font-family="Liberation Sans, sans-serif" fill="#777" textLength="8" lengthAdjust="spacingAndGlyphs">¶</text>
<rect x="274.5" y="83.5" width="17.5" height="19" fill="#c4c4c4"/>
<line x1="277.5" y1="88.2" x2="289.0" y2="88.2" stroke="#8c8c8c" stroke-width="1"/>
<line x1="277.5" y1="90.8" x2="285.5" y2="90.8" stroke="#8c8c8c" stroke-width="1"/>
<line x1="277.5" y1="93.4" x2="289.0" y2="93.4" stroke="#8c8c8c" stroke-width="1"/>
<line x1="277.5" y1="96.0" x2="285.5" y2="96.0" stroke="#8c8c8c" stroke-width="1"/>
<line x1="295" y1="88.2" x2="306" y2="88.2" stroke="#969696" stroke-width="1"/>
<line x1="297" y1="90.8" x2="304" y2="90.8" stroke="#969696" stroke-width="1"/>
<line x1="295" y1="93.4" x2="306" y2="93.4" stroke="#969696" stroke-width="1"/>
<line x1="297" y1="96.0" x2="304" y2="96.0" stroke="#969696" stroke-width="1"/>
<line x1="313" y1="88.2" x2="324.5" y2="88.2" stroke="#969696" stroke-width="1"/>
<line x1="317" y1="90.8" x2="324.5" y2="90.8" stroke="#969696" stroke-width="1"/>
<line x1="313" y1="93.4" x2="324.5" y2="93.4" stroke="#969696" stroke-width="1"/>
<line x1="317" y1="96.0" x2="324.5" y2="96.0" stroke="#969696" stroke-width="1"/>
<line x1="331" y1="88.2" x2="343" y2="88.2" stroke="#969696" stroke-width="1"/>
<line x1="331" y1="90.8" x2="343" y2="90.8" stroke="#969696" stroke-width="1"/>
<line x1="331" y1="93.4" x2="343" y2="93.4" stroke="#969696" stroke-width="1"/>
<line x1="331" y1="96.0" x2="343" y2="96.0" stroke="#969696" stroke-width="1"/>
<line x1="349" y1="84" x2="349" y2="102" stroke="#e4e4e4" stroke-width="1"/>
<line x1="360.5" y1="88.2" x2="368.0" y2="88.2" stroke="#969696" stroke-width="1"/>
<line x1="360.5" y1="90.8" x2="368.0" y2="90.8" stroke="#969696" stroke-width="1"/>
<line x1="360.5" y1="93.4" x2="368.0" y2="93.4" stroke="#969696" stroke-width="1"/>
<line x1="360.5" y1="96.0" x2="368.0" y2="96.0" stroke="#969696" stroke-width="1"/>
<path d="M357,86.5 V99.5 M355.3,88.5 L357,86.3 L358.7,88.5 M355.3,97.5 L357,99.7 L358.7,97.5" fill="none" stroke="#6f98d6" stroke-width="1" />
<path d="M372.0,91.75 L376.0,91.75 L374,94.25 Z" fill="#777" />
<line x1="383.6" y1="84" x2="383.6" y2="102" stroke="#e4e4e4" stroke-width="1"/>
<path d="M393,92.5 L397.5,87.5 L401.5,92 L397,96 Z" fill="#fff" stroke="#666" stroke-width="1" />
<path d="M396,86.5 V90" fill="none" stroke="#666" stroke-width="1" />
<path d="M401.5,92 Q403,95 401.8,96" fill="none" stroke="#3b74c6" stroke-width="1" />
<rect x="391" y="97" width="11.5" height="2.5" fill="#fff" stroke="#999" stroke-width="0.7"/>
<path d="M407.0,91.75 L411.0,91.75 L409,94.25 Z" fill="#777" />
<rect x="418.7" y="86.6" width="9.6" height="9.6" fill="none" stroke="#b0b0b0" stroke-width="1"/>
<line x1="423.5" y1="86.6" x2="423.5" y2="96.2" stroke="#b0b0b0" stroke-width="1"/>
<line x1="418.7" y1="91.4" x2="428.3" y2="91.4" stroke="#b0b0b0" stroke-width="1"/>
<rect x="418.7" y="86.6" width="9.6" height="9.6" fill="none" stroke="#fff" stroke-width="1" stroke-dasharray="1.5 1.5"/>
<path d="M435.0,91.75 L439.0,91.75 L437,94.25 Z" fill="#777" />
<text x="334.4" y="120.8" font-size="9.5" fill="#444" textLength="41.6" lengthAdjust="spacingAndGlyphs" font-family="Liberation Sans, sans-serif">Paragraph</text>
<path d="M444.5,118.5 V114.5 H448.5 M446.7,116.7 L450.0,120.0 M450.0,117.3 V120.0 H447.3" fill="none" stroke="#999" stroke-width="0.8" />
<line x1="453" y1="52" x2="453" y2="118" stroke="#e4e4e4" stroke-width="1"/>
<rect x="457.5" y="56" width="247" height="46" fill="#fff" stroke="#d0d0d0" stroke-width="1"/>
<rect x="458.5" y="57" width="56.5" height="44" fill="#e8e8e8" stroke="#bdbdbd" stroke-width="2"/>
<text x="464.0" y="76.1" font-size="10" fill="#505050" textLength="46.8" lengthAdjust="spacingAndGlyphs" font-family="Liberation Sans, sans-serif">AaBbCcDc</text>
<text x="468.0" y="95.4" font-size="9.5" fill="#707070" textLength="39.0" lengthAdjust="spacingAndGlyphs" font-family="Liberation Sans, sans-serif">¶ Normal</text>
<text x="522.0" y="76.7" font-size="13" fill="#6f8cbd" textLength="46.4" lengthAdjust="spacingAndGlyphs" font-family="Liberation Sans, sans-serif" font-weight="bold">AaBbC</text>
<text x="521.5" y="95.4" font-size="9.5" fill="#707070" textLength="48.2" lengthAdjust="spacingAndGlyphs" font-family="Liberation Sans, sans-serif">sub headi...</text>
<text x="580.5" y="76.1" font-size="10" fill="#5a5a5a" textLength="46.8" lengthAdjust="spacingAndGlyphs" font-family="Liberation Sans, sans-serif">AaBbCcDc</text>
<text x="579.6" y="95.4" font-size="9.5" fill="#707070" textLength="49.1" lengthAdjust="spacingAndGlyphs" font-family="Liberation Sans, sans-serif">¶ No Spac...</text>
<clipPath id="h1"><rect x="636" y="56" width="50.5" height="46"/></clipPath>
<g clip-path="url(#h1)">
<text x="639.0" y="78.0" font-size="15.5" fill="#819dc8" textLength="53.0" lengthAdjust="spacingAndGlyphs" font-family="Liberation Sans, sans-serif">AaBbCc</text>
</g>
<text x="641.0" y="95.8" font-size="9.5" fill="#707070" textLength="42.6" lengthAdjust="spacingAndGlyphs" font-family="Liberation Sans, sans-serif">Heading 1</text>
<rect x="692.5" y="56" width="12" height="46" fill="#fff" stroke="#d0d0d0" stroke-width="1"/>
<line x1="692.5" y1="71.5" x2="704.5" y2="71.5" stroke="#d0d0d0" stroke-width="1"/>
<line x1="692.5" y1="87" x2="704.5" y2="87" stroke="#d0d0d0" stroke-width="1"/>
<path d="M696.5,64.75 L700.5,64.75 L698.5,62.25 Z" fill="#aaa" />
<path d="M696.5,78.25 L700.5,78.25 L698.5,80.75 Z" fill="#777" />
<line x1="696.5" y1="92.5" x2="700.5" y2="92.5" stroke="#777" stroke-width="1"/>
<path d="M696.5,94.55 L700.5,94.55 L698.5,97.05 Z" fill="#777" />
<text x="563.8" y="120.8" font-size="9.5" fill="#444" textLength="22.6" lengthAdjust="spacingAndGlyphs" font-family="Liberation Sans, sans-serif">Styles</text>
<path d="M701.5,118.5 V114.5 H705.5 M703.7,116.7 L707.0,120.0 M707.0,117.3 V120.0 H704.3" fill="none" stroke="#999" stroke-width="0.8" />
<line x1="710.5" y1="52" x2="710.5" y2="118" stroke="#e4e4e4" stroke-width="1"/>
<circle cx="724.5" cy="59.5" r="3.3" fill="none" stroke="#7ea3dc" stroke-width="1.2"/>
<line x1="722" y1="62" x2="717.5" y2="66" stroke="#7ea3dc" stroke-width="1.5"/>
<text x="732.4" y="65.0" font-size="9.5" fill="#3c3c3c" textLength="17.6" lengthAdjust="spacingAndGlyphs" font-family="Liberation Sans, sans-serif">Find</text>
<path d="M758.6,60.75 L762.6,60.75 L760.6,63.25 Z" fill="#777" />
<text x="717.0" y="79.9" font-size="8" fill="#444" textLength="9.0" lengthAdjust="spacingAndGlyphs" font-family="Liberation Sans, sans-serif">ab</text>
<text x="720.5" y="86.4" font-size="8" fill="#3b74c6" textLength="8.5" lengthAdjust="spacingAndGlyphs" font-family="Liberation Sans, sans-serif">ac</text>
<path d="M717,83.5 H720 M718.8,82.3 L720.2,83.5 L718.8,84.7" fill="none" stroke="#3b74c6" stroke-width="0.8" />
<text x="732.4" y="83.4" font-size="9.5" fill="#3c3c3c" textLength="32.6" lengthAdjust="spacingAndGlyphs" font-family="Liberation Sans, sans-serif">Replace</text>
<path d="M720.5,93 V103 L722.8,100.8 L724.5,104.3 L725.8,103.7 L724.2,100.3 L727.2,100 Z" fill="#fff" stroke="#808080" stroke-width="0.9" />
<text x="732.4" y="101.8" font-size="9.5" fill="#3c3c3c" textLength="24.6" lengthAdjust="spacingAndGlyphs" font-family="Liberation Sans, sans-serif">Select</text>
<path d="M759.4,97.75 L763.4,97.75 L761.4,100.25 Z" fill="#777" />
<text x="727.6" y="120.8" font-size="9.5" fill="#707070" textLength="28.8" lengthAdjust="spacingAndGlyphs" font-family="Liberation Sans, sans-serif">Editing</text>
<line x1="774.5" y1="52" x2="774.5" y2="118" stroke="#e4e4e4" stroke-width="1"/>
</g>
<path d="M788,119.3 L791.5,115.8 L795,119.3" fill="none" stroke="#606060" stroke-width="1.5" />
<rect x="71.5" y="138.5" width="641" height="300" fill="#fff" stroke="#cfcfcf" stroke-width="1"/>
<line x1="72" y1="215.5" x2="712" y2="215.5" stroke="#747474" stroke-width="1" stroke-dasharray="2.9 2.5"/>
<rect x="75.5" y="215.7" width="43" height="15.5" fill="#e0e0e0" stroke="#939393" stroke-width="1.2"/>
<text x="82.0" y="227.1" font-size="9.5" fill="#3a3a3a" textLength="29.7" lengthAdjust="spacingAndGlyphs" font-family="Liberation Sans, sans-serif" stroke="#3a3a3a" stroke-width="0.35">Header</text>
<line x1="149.5" y1="176.7" x2="149.5" y2="192" stroke="#111" stroke-width="1.2"/>
<path d="M245.8,171.5 H247.7 L248.5,172.3 L249.3,171.5 H251.2 M245.8,184.5 H247.7 L248.5,183.7 L249.3,184.5 H251.2 M248.5,172.3 V183.7" fill="none" stroke="#222" stroke-width="1" />
<rect x="790" y="125" width="10" height="305" fill="#e0e0e0"/>
<line x1="790" y1="125" x2="790" y2="430" stroke="#cfcfcf" stroke-width="1"/>
<rect x="790.5" y="126.5" width="10" height="11.5" fill="#fff" stroke="#ababab" stroke-width="1"/>
<path d="M792.5,134.25 L798.5,134.25 L795.5,130.75 Z" fill="#555" />
<rect x="790.5" y="138" width="10" height="89.5" fill="#fff" stroke="#ababab" stroke-width="1"/>
<rect x="790.5" y="414" width="10" height="14.5" fill="#fff" stroke="#ababab" stroke-width="1"/>
<path d="M792.5,419.75 L798.5,419.75 L795.5,423.25 Z" fill="#555" />
<rect x="0" y="429.5" width="800" height="13" fill="#f1f1f1"/>
<line x1="0" y1="429.5" x2="800" y2="429.5" stroke="#cdcdcd" stroke-width="1"/>
<text x="2.0" y="441.0" font-size="9.5" fill="#333" textLength="45.0" lengthAdjust="spacingAndGlyphs" font-family="Liberation Sans, sans-serif" stroke="#333" stroke-width="0.2">Page 1 of 1</text>
<text x="64.5" y="441.0" font-size="9.5" fill="#333" textLength="31.5" lengthAdjust="spacingAndGlyphs" font-family="Liberation Sans, sans-serif" stroke="#333" stroke-width="0.2">0 words</text>
<path d="M113,433.5 H117.5 V441.5 H113 Z M117.5,433.5 H121 V436" fill="none" stroke="#555" stroke-width="0.9" />
<path d="M119,441 L119.5,439 L123.5,434.5 L124.8,435.6 L120.8,440.3 Z" fill="#f1f1f1" stroke="#555" stroke-width="0.8" />
<path d="M572.5,433 H577 V441.5 H572.5 Z M577,433 H581.8 V441.5 H577" fill="none" stroke="#555" stroke-width="0.9" />
<line x1="573.8" y1="435.5" x2="576" y2="435.5" stroke="#555" stroke-width="0.9"/>
<line x1="578.2" y1="435.5" x2="580.6" y2="435.5" stroke="#555" stroke-width="0.9"/>
<line x1="573.8" y1="437.5" x2="576" y2="437.5" stroke="#555" stroke-width="0.9"/>
<line x1="578.2" y1="437.5" x2="580.6" y2="437.5" stroke="#555" stroke-width="0.9"/>
<line x1="573.8" y1="439.5" x2="576" y2="439.5" stroke="#555" stroke-width="0.9"/>
<line x1="578.2" y1="439.5" x2="580.6" y2="439.5" stroke="#555" stroke-width="0.9"/>
<rect x="594.5" y="430" width="29" height="12" fill="#c6c6c6"/>
<rect x="604" y="432.7" width="10.5" height="10" fill="#c6c6c6" stroke="#555" stroke-width="1"/>
<line x1="605.5" y1="435" x2="613" y2="435" stroke="#555" stroke-width="1.3"/>
<line x1="605.5" y1="438.2" x2="613" y2="438.2" stroke="#555" stroke-width="1.3"/>
<line x1="605.5" y1="441.3" x2="613" y2="441.3" stroke="#555" stroke-width="1.3"/>
<rect x="634.8" y="432.8" width="8.5" height="9" fill="none" stroke="#555" stroke-width="1"/>
<line x1="636" y1="435.2" x2="642" y2="435.2" stroke="#555" stroke-width="1"/>
<line x1="636" y1="437.6" x2="639.5" y2="437.6" stroke="#555" stroke-width="1"/>
<circle cx="642.3" cy="439.3" r="2.4" fill="#888" stroke="#444" stroke-width="1"/>
<line x1="659" y1="437.5" x2="663.5" y2="437.5" stroke="#444" stroke-width="1.3"/>
<line x1="667.5" y1="437.5" x2="747.6" y2="437.5" stroke="#8a8a8a" stroke-width="1"/>
<rect x="706.5" y="432" width="3.5" height="10" fill="#666"/>
<line x1="750.7" y1="437.5" x2="756.7" y2="437.5" stroke="#444" stroke-width="1.3"/>
<line x1="753.7" y1="434.5" x2="753.7" y2="440.5" stroke="#444" stroke-width="1.3"/>
<text x="767.0" y="441.0" font-size="9.5" fill="#333" textLength="21.0" lengthAdjust="spacingAndGlyphs" font-family="Liberation Sans, sans-serif" stroke="#333" stroke-width="0.2">100%</text>
</svg>
</body></html>
